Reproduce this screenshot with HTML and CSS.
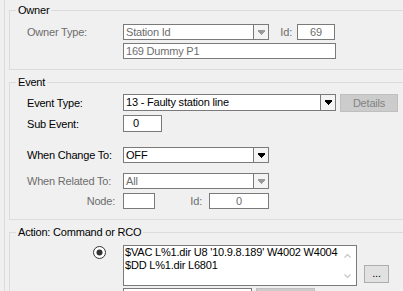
FILE: index.html
```html
<!DOCTYPE html>
<html>
<head>
  <title>Event Settings</title>
  <meta charset="UTF-8">
  <link rel="stylesheet" href="styles.css">
</head>
<body>
  <div class="form">

    <!-- Owner -->
    <div class="group group-owner">
      <div class="group-title">Owner</div>
      <div class="row row-owner-type">
        <span class="label disabled">Owner Type:</span>
        <div class="combo combo-short disabled">
          <span class="combo-text">Station Id</span>
          <span class="combo-btn"><svg width="7" height="5" viewBox="0 0 7 5"><path d="M0 0H7V2H6V3H5V4H4V5H3V4H2V3H1V2H0Z"/></svg></span>
        </div>
        <span class="side-label side-owner disabled">Id:</span>
        <div class="field field-id disabled">69</div>
      </div>
      <div class="row row-owner-name">
        <span class="label"></span>
        <div class="field field-wide disabled">169 Dummy P1</div>
      </div>
    </div>

    <!-- Event -->
    <div class="group group-event">
      <div class="group-title">Event</div>
      <div class="row row-event-type">
        <span class="label">Event Type:</span>
        <div class="combo combo-wide combo-tall">
          <span class="combo-text">13 - Faulty station line</span>
          <span class="combo-btn"><svg width="7" height="5" viewBox="0 0 7 5"><path d="M0 0H7V2H6V3H5V4H4V5H3V4H2V3H1V2H0Z"/></svg></span>
        </div>
        <div class="btn-off btn-details">Details</div>
      </div>
      <div class="row row-sub-event">
        <span class="label">Sub Event:</span>
        <div class="field field-sub">0</div>
      </div>
      <div class="row row-change">
        <span class="label">When Change To:</span>
        <div class="combo combo-short">
          <span class="combo-text">OFF</span>
          <span class="combo-btn"><svg width="7" height="5" viewBox="0 0 7 5"><path d="M0 0H7V2H6V3H5V4H4V5H3V4H2V3H1V2H0Z"/></svg></span>
        </div>
      </div>
      <div class="row row-related">
        <span class="label disabled">When Related To:</span>
        <div class="combo combo-short disabled">
          <span class="combo-text">All</span>
          <span class="combo-btn"><svg width="7" height="5" viewBox="0 0 7 5"><path d="M0 0H7V2H6V3H5V4H4V5H3V4H2V3H1V2H0Z"/></svg></span>
        </div>
      </div>
      <div class="row row-node">
        <span class="label label-right disabled">Node:</span>
        <div class="field field-node"></div>
        <span class="side-label side-node disabled">Id:</span>
        <div class="field field-node-id disabled">0</div>
      </div>
    </div>

    <!-- Action -->
    <div class="group group-action">
      <div class="group-title">Action: Command or RCO</div>
      <div class="row row-action">
        <div class="radio-cell">
          <svg width="13" height="13" viewBox="0 0 13 13">
            <circle cx="6.5" cy="6.5" r="6" fill="#fff" stroke="#333"/>
            <circle cx="6.5" cy="6.5" r="3" fill="#333"/>
          </svg>
        </div>
        <div class="memo">
          <div class="memo-text">$VAC L%1.dir U8 '10.9.8.189' W4002 W4004<br>$DD L%1.dir L6801</div>
          <div class="memo-scroll">
            <svg width="7" height="5" viewBox="0 0 7 5"><polyline points="0.5,4.5 3.5,1.5 6.5,4.5" fill="none" stroke="#c4c4c4" stroke-width="1.2"/></svg>
            <svg width="7" height="5" viewBox="0 0 7 5"><polyline points="0.5,0.5 3.5,3.5 6.5,0.5" fill="none" stroke="#c4c4c4" stroke-width="1.2"/></svg>
          </div>
        </div>
        <div class="btn btn-more">...</div>
      </div>
      <div class="row row-bottom">
        <span class="label"></span>
        <div class="field field-rco"></div>
        <div class="btn-off btn-rco"></div>
      </div>
    </div>

  </div>
</body>
</html>
```

FILE: styles.css
```css
html, body {
  margin: 0;
  height: 100%;
  overflow: hidden;
  background: #f0f0f0;
}
body {
  font-family: "Liberation Sans", Arial, sans-serif;
  font-size: 11px;
  letter-spacing: -0.2px;
  color: #000;
}

/* left edge of the dialog + the group boxes */
.form {
  height: 100%;
  box-sizing: border-box;
  margin-left: 4px;
  padding: 10px 0 0 4px;
  border-left: 1px solid #dcdcdc;
  overflow: hidden;
}
.group {
  border: 1px solid #dcdcdc;
  border-right: none;
  padding: 0 0 10px 17px;
}
.group-title {
  width: fit-content;
  margin: -7px 0 0 -11px;
  padding: 0 2px;
  line-height: 13px;
  background: #f0f0f0;
  white-space: nowrap;
}
.group-event,
.group-action {
  margin-top: 12px;
}

.row {
  display: flex;
  align-items: center;
}
.label {
  width: 96px;
  flex: none;
  white-space: nowrap;
}
.label-right {
  text-align: right;
  padding-right: 8px;
  box-sizing: border-box;
}
.disabled {
  color: #6d6d6d;
}

/* row spacing */
.row-owner-type { margin-top: 7px; }
.row-owner-name { margin-top: 3px; }
.row-event-type { margin-top: 5px; }
.row-sub-event  { margin-top: 4px; }
.row-change     { margin-top: 15px; }
.row-related    { margin-top: 10px; }
.row-node       { margin-top: 4px; }
.row-action {
  margin-top: 6px;
  align-items: flex-start;
}
.row-bottom     { margin-top: 2px; }

/* combo boxes */
.combo {
  display: flex;
  flex: none;
  height: 16px;
  box-sizing: border-box;
  border: 1px solid #7a7a7a;
  background: #fff;
}
.combo-tall {
  height: 17px;
}
.combo-short { width: 146px; }
.combo-wide  { width: 213px; }
.combo-text {
  flex: 1;
  padding-left: 2px;
  line-height: 14px;
  white-space: nowrap;
  overflow: hidden;
}
.combo-tall .combo-text {
  line-height: 15px;
}
.combo-btn {
  width: 15px;
  box-sizing: border-box;
  border-left: 1px solid #7a7a7a;
  background: #f4f4f4;
  display: flex;
  align-items: center;
  justify-content: center;
}
.combo-btn svg {
  fill: #000;
  shape-rendering: crispEdges;
}
.combo.disabled .combo-btn svg {
  fill: #9a9a9a;
}

/* text fields */
.field {
  flex: none;
  height: 16px;
  box-sizing: border-box;
  border: 1px solid #7a7a7a;
  background: #fff;
  line-height: 14px;
  padding-left: 2px;
  white-space: nowrap;
}
.field-id {
  width: 38px;
  padding: 0;
  text-align: center;
}
.field-wide { width: 213px; }
.field-sub {
  width: 39px;
  height: 17px;
  line-height: 15px;
  padding-left: 9px;
}
.field-node { width: 32px; }
.field-node-id {
  width: 60px;
  padding: 0;
  text-align: center;
}
.field-rco {
  width: 129px;
  height: 20px;
}

.side-label {
  flex: none;
  box-sizing: border-box;
  text-align: right;
}
.side-owner {
  width: 28px;
  padding-right: 5px;
}
.side-node {
  width: 54px;
  padding-right: 7px;
}

/* buttons */
.btn,
.btn-off {
  flex: none;
  box-sizing: border-box;
  text-align: center;
}
.btn {
  border: 1px solid #adadad;
  background: #e1e1e1;
}
.btn-off {
  border: 1px solid #bfbfbf;
  background: #cccccc;
  color: #838383;
}
.btn-details {
  width: 58px;
  height: 18px;
  margin: 0 0 -1px 4px;
  line-height: 16px;
}
.btn-more {
  width: 25px;
  height: 18px;
  margin: 0 0 3px 7px;
  align-self: flex-end;
  line-height: 14px;
}
.btn-rco {
  width: 59px;
  height: 20px;
  margin-left: 4px;
}

/* command memo */
.radio-cell {
  width: 96px;
  flex: none;
  box-sizing: border-box;
  padding: 1px 0 0 66px;
}
.radio-cell svg {
  display: block;
}
.memo {
  display: flex;
  flex: none;
  width: 234px;
  height: 41px;
  box-sizing: border-box;
  border: 1px solid #7a7a7a;
  background: #fff;
}
.memo-text {
  flex: 1;
  padding-left: 1px;
  line-height: 13px;
  white-space: nowrap;
  overflow: hidden;
}
.memo-scroll {
  width: 17px;
  box-sizing: border-box;
  padding: 7px 0 6px;
  display: flex;
  flex-direction: column;
  justify-content: space-between;
  align-items: center;
}
.memo-scroll svg {
  display: block;
}
```
